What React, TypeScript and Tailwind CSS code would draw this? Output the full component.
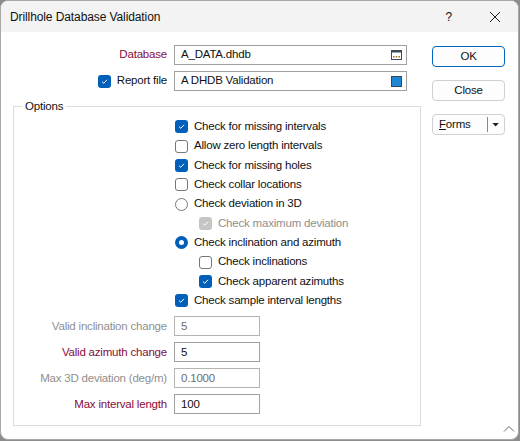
import React from "react";

const red = "text-[#880c3c]";

function CheckBox({ checked = false, disabled = false }: { checked?: boolean; disabled?: boolean }) {
  if (checked) {
    return (
      <span
        className={`flex h-[13px] w-[13px] shrink-0 items-center justify-center rounded-[3px] ${
          disabled ? "bg-[#c5c5c5]" : "bg-[#005fb8]"
        }`}
      >
        <svg width="9" height="9" viewBox="0 0 9 9">
          <path d="M2 4.6 L3.8 6.3 L7 2.8" fill="none" stroke="white" strokeWidth="1" />
        </svg>
      </span>
    );
  }
  return <span className="h-[13px] w-[13px] shrink-0 rounded-[3px] border border-[#777] bg-white" />;
}

function Radio({ checked = false }: { checked?: boolean }) {
  if (checked) {
    return (
      <span className="flex h-[13px] w-[13px] shrink-0 items-center justify-center rounded-full bg-[#005fb8]">
        <span className="h-[5px] w-[5px] rounded-full bg-white" />
      </span>
    );
  }
  return <span className="h-[13px] w-[13px] shrink-0 rounded-full border border-[#777] bg-white" />;
}

type Opt = { label: string; kind: "check" | "radio"; checked?: boolean; disabled?: boolean; sub?: boolean };

const options: Opt[] = [
  { label: "Check for missing intervals", kind: "check", checked: true },
  { label: "Allow zero length intervals", kind: "check" },
  { label: "Check for missing holes", kind: "check", checked: true },
  { label: "Check collar locations", kind: "check" },
  { label: "Check deviation in 3D", kind: "radio" },
  { label: "Check maximum deviation", kind: "check", checked: true, disabled: true, sub: true },
  { label: "Check inclination and azimuth", kind: "radio", checked: true },
  { label: "Check inclinations", kind: "check", sub: true },
  { label: "Check apparent azimuths", kind: "check", checked: true, sub: true },
  { label: "Check sample interval lengths", kind: "check", checked: true },
];

const fields = [
  { label: "Valid inclination change", value: "5", disabled: true },
  { label: "Valid azimuth change", value: "5" },
  { label: "Max 3D deviation (deg/m)", value: "0.1000", disabled: true },
  { label: "Max interval length", value: "100" },
];

function Button({ children, primary = false }: { children: React.ReactNode; primary?: boolean }) {
  return (
    <div
      className={`flex h-[21px] w-[73px] items-center justify-center rounded-[4px] border bg-[#fdfdfd] ${
        primary ? "border-[#0067c0]" : "border-[#d0d0d0]"
      }`}
    >
      {children}
    </div>
  );
}

export default function App() {
  return (
    <div className="h-[441px] w-[520px] bg-[#8c8c8c] font-['Liberation_Sans',sans-serif] text-[11.5px] leading-none tracking-[-0.2px] text-[#111]">
      <div className="flex h-[440px] w-[519px] flex-col overflow-hidden rounded-[8px] border border-[#a8a8a8] bg-white">
        {/* Title bar */}
        <div className="flex h-[31px] shrink-0 items-center bg-[#f3f3f3] pl-[9px]">
          <span className="flex-1 text-[12px] tracking-[-0.1px]">Drillhole Database Validation</span>
          <span className="mr-[37px] text-[12px]">?</span>
          <svg width="12" height="12" viewBox="0 0 12 12" className="mr-[17px]">
            <path d="M1 1 L11 11 M11 1 L1 11" stroke="#222" strokeWidth="1" />
          </svg>
        </div>

        <div className="relative flex flex-1 pt-[13px]">
          {/* Left */}
          <div className="flex w-[420px] flex-col">
            <div className="flex h-[20px] items-center">
              <span className={`w-[166px] text-right ${red}`}>Database</span>
              <div className="ml-[7px] flex h-[20px] w-[233px] items-center border border-[#a0a0a0] pl-[6px] pr-[4px]">
                <span className="flex-1">A_DATA.dhdb</span>
                <svg width="11" height="10" viewBox="0 0 11 10">
                  <rect x="0.5" y="0.5" width="10" height="9" fill="white" stroke="#3d4a5c" />
                  <rect x="0.5" y="0.5" width="10" height="2" fill="#3d4a5c" />
                  <rect x="2" y="6" width="1.5" height="1.5" fill="#9a6a1e" />
                  <rect x="4.75" y="6" width="1.5" height="1.5" fill="#9a6a1e" />
                  <rect x="7.5" y="6" width="1.5" height="1.5" fill="#9a6a1e" />
                </svg>
              </div>
            </div>
            <div className="mt-[6px] flex h-[20px] items-center">
              <div className="flex w-[166px] items-center justify-end gap-[6px]">
                <CheckBox checked />
                <span className="text-right">Report file</span>
              </div>
              <div className="ml-[7px] flex h-[20px] w-[233px] items-center border border-[#a0a0a0] pl-[6px] pr-[4px]">
                <span className="flex-1">A DHDB Validation</span>
                <span className="h-[11px] w-[11px] border border-[#35475c] bg-[#1f87d2]" />
              </div>
            </div>

            {/* Options group */}
            <fieldset className="ml-[12px] mt-[8px] h-[327px] w-[408px] border border-[#dcdcdc] px-0 pb-0">
              <legend className="ml-[8px] px-[3px] leading-[14px]">Options</legend>
              <div className="mt-[4px] flex flex-col">
                {options.map((o) => (
                  <div
                    key={o.label}
                    className={`flex h-[19.35px] items-center gap-[6px] ${o.sub ? "pl-[185px]" : "pl-[161px]"} ${
                      o.disabled ? "text-[#8f8f8f]" : ""
                    }`}
                  >
                    {o.kind === "check" ? (
                      <CheckBox checked={o.checked} disabled={o.disabled} />
                    ) : (
                      <Radio checked={o.checked} />
                    )}
                    <span>{o.label}</span>
                  </div>
                ))}
              </div>
              <div className="mt-[6px] flex flex-col gap-[6px]">
                {fields.map((f) => (
                  <div key={f.label} className="flex h-[20px] items-center">
                    <span
                      className={`w-[153px] text-right ${f.disabled ? "text-[#8f8f8f]" : red}`}
                    >
                      {f.label}
                    </span>
                    <div
                      className={`ml-[7px] flex h-[20px] w-[86px] items-center border pl-[6px] ${
                        f.disabled ? "border-[#b4b4b4] text-[#6d6d6d]" : "border-[#a0a0a0]"
                      }`}
                    >
                      {f.value}
                    </div>
                  </div>
                ))}
              </div>
            </fieldset>
          </div>

          {/* Right buttons */}
          <div className="ml-[11px] flex flex-col gap-[13px] pt-[1px]">
            <Button primary>OK</Button>
            <Button>Close</Button>
            <div className="flex h-[21px] w-[73px] items-center rounded-[4px] border border-[#d0d0d0] bg-[#fdfdfd]">
              <span className="w-[55px] pl-[6px] text-left">
                <span className="underline">F</span>orms
              </span>
              <span className="h-[15px] w-px bg-[#888]" />
              <svg width="16" height="8" viewBox="0 0 16 8">
                <path d="M4.5 2 L11 2 L7.75 5.5 Z" fill="#222" />
              </svg>
            </div>
          </div>

          <svg width="12" height="8" viewBox="0 0 12 8" className="absolute bottom-[6px] right-[3px]">
            <path d="M1 6.5 L6 1.5 L11 6.5" fill="none" stroke="#666" strokeWidth="1" />
          </svg>
        </div>
      </div>
    </div>
  );
}
